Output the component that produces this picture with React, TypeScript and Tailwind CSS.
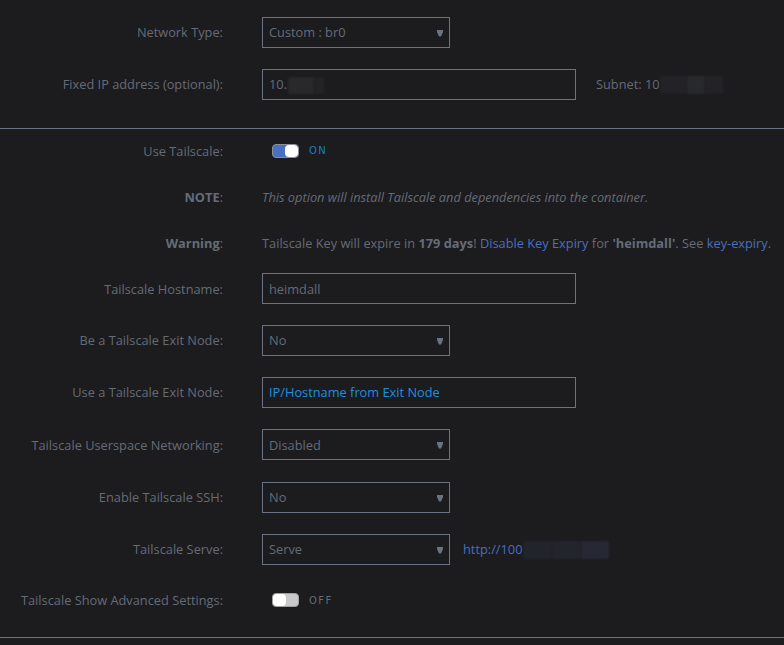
import React from "react";

const font = { fontFamily: '"Open Sans", "Noto Sans", "Liberation Sans", sans-serif' };

function Label({ children }: { children: React.ReactNode }) {
  return <div className="w-[223px] shrink-0 pt-[2px] text-right text-[#656c78]">{children}</div>;
}

function Row({ h, label, children }: { h: string; label: React.ReactNode; children?: React.ReactNode }) {
  return (
    <div className={`flex items-center ${h}`}>
      <Label>{label}</Label>
      <div className="ml-[39px] flex items-center">{children}</div>
    </div>
  );
}

function Select({ value }: { value: string }) {
  return (
    <div className="relative flex h-[31px] w-[188px] items-center border border-[#6b7383] pl-[6px] pt-[2px] text-[#656c78]">
      {value}
      <svg className="absolute right-[6px] top-[12px]" width="6" height="7" viewBox="0 0 6 7">
        <path d="M0 0H6V2L4 6.5H2L0 2Z" fill="#6b7383" />
      </svg>
    </div>
  );
}

function Input({ children, blue }: { children: React.ReactNode; blue?: boolean }) {
  return (
    <div className={`flex h-[31px] w-[314px] items-center border border-[#6b7383] pl-[6px] pt-[2px] ${blue ? "text-[#1d8fe0]" : "text-[#656c78]"}`}>
      {children}
    </div>
  );
}

function Blur({ w, h = "h-[17px]", c = "bg-[#262629]" }: { w: string; h?: string; c?: string }) {
  return <span className={`inline-block ${w} ${h} ${c} blur-[1px]`} />;
}

function Toggle({ on }: { on: boolean }) {
  return (
    <div className="ml-[10px] flex items-center">
      {on ? (
        <div className="flex h-[14px] w-[27px] overflow-hidden rounded-[4px] border border-[#8a8f99] bg-[#4b70c2]">
          <div className="ml-auto h-full w-[13px] rounded-[4px] bg-white" />
        </div>
      ) : (
        <div className="flex h-[14px] w-[27px] overflow-hidden rounded-[4px] border border-[#a0a0a0] bg-[#c9c9c9]">
          <div className="h-full w-[13px] rounded-[4px] bg-white" />
        </div>
      )}
      <span
        className={`ml-[10px] text-[10px] tracking-[1.5px] ${on ? "text-[#1a7fc0]" : "text-[#656c78]"}`}
        style={{ fontFamily: '"DejaVu Sans", sans-serif' }}
      >
        {on ? "ON" : "OFF"}
      </span>
    </div>
  );
}

export default function App() {
  return (
    <div className="h-[645px] w-[784px] overflow-hidden bg-[#1c1b1d] text-[12.8px]" style={font}>
      <div className="pt-[6px]">
        <Row h="h-[52px]" label="Network Type:">
          <Select value="Custom : br0" />
        </Row>
        <Row h="h-[52px]" label="Fixed IP address (optional):">
          <Input>
            10.<span className="ml-[1px] inline-flex"><Blur w="w-[26px]" c="bg-[#29292c]" /><Blur w="w-[10px]" c="bg-[#232326]" /></span>
          </Input>
          <span className="ml-[20px] flex items-center pt-[2px] text-[#656c78]">
            Subnet: 10
            <span className="inline-flex"><Blur w="w-[27px]" h="h-[18px]" c="bg-[#232327]" /><Blur w="w-[18px]" h="h-[18px]" c="bg-[#28292d]" /><Blur w="w-[18px]" h="h-[18px]" c="bg-[#232327]" /></span>
          </span>
        </Row>
      </div>
      <div className="mt-[18px] h-px bg-[#6b7383]" />
      <Row h="h-[43px]" label="Use Tailscale:">
        <Toggle on />
      </Row>
      <Row
        h="h-[50px]"
        label={
          <>
            <b className="font-bold">NOTE</b>:
          </>
        }
      >
        <span className="pt-[2px] italic text-[#656c78]">This option will install Tailscale and dependencies into the container.</span>
      </Row>
      <Row
        h="h-[41px]"
        label={
          <>
            <b className="font-bold">Warning</b>:
          </>
        }
      >
        <span className="whitespace-nowrap pt-[2px] text-[#656c78]">
          Tailscale Key will expire in <b className="font-bold">179 days</b>! <span className="text-[#4a6fbf]">Disable Key Expiry</span> for{" "}
          <b className="font-bold">'heimdall'</b>. See <span className="text-[#4a6fbf]">key-expiry</span>.
        </span>
      </Row>
      <Row h="h-[51px]" label="Tailscale Hostname:">
        <Input>heimdall</Input>
      </Row>
      <Row h="h-[52px]" label="Be a Tailscale Exit Node:">
        <Select value="No" />
      </Row>
      <Row h="h-[52px]" label="Use a Tailscale Exit Node:">
        <Input blue>IP/Hostname from Exit Node</Input>
      </Row>
      <Row h="h-[53px]" label="Tailscale Userspace Networking:">
        <Select value="Disabled" />
      </Row>
      <Row h="h-[52px]" label="Enable Tailscale SSH:">
        <Select value="No" />
      </Row>
      <Row h="h-[52px]" label="Tailscale Serve:">
        <Select value="Serve" />
        <span className="ml-[13px] flex items-center pt-[2px] text-[#4a6fbf]">
          http://100
          <span className="inline-flex"><Blur w="w-[29px]" h="h-[18px]" c="bg-[#22242b]" /><Blur w="w-[29px]" h="h-[18px]" c="bg-[#23252d]" /><Blur w="w-[28px]" h="h-[18px]" c="bg-[#262833]" /></span>
        </span>
      </Row>
      <Row h="h-[50px]" label="Tailscale Show Advanced Settings:">
        <Toggle on={false} />
      </Row>
      <div className="mt-[12px] h-px bg-[#6b7383]" />
    </div>
  );
}
